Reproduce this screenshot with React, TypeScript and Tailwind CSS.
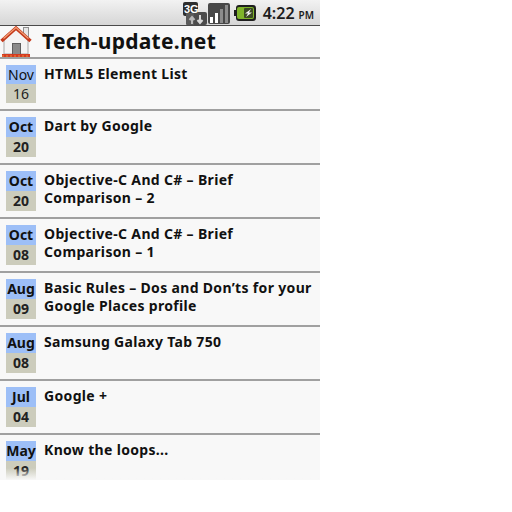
import React from 'react'

type Post = { month: string; day: string; title: string[]; plain?: boolean }

const posts: Post[] = [
  { month: 'Nov', day: '16', title: ['HTML5 Element List'], plain: true },
  { month: 'Oct', day: '20', title: ['Dart by Google'] },
  { month: 'Oct', day: '20', title: ['Objective-C And C# – Brief', 'Comparison – 2'] },
  { month: 'Oct', day: '08', title: ['Objective-C And C# – Brief', 'Comparison – 1'] },
  { month: 'Aug', day: '09', title: ['Basic Rules – Dos and Don’ts for your', 'Google Places profile'] },
  { month: 'Aug', day: '08', title: ['Samsung Galaxy Tab 750'] },
  { month: 'Jul', day: '04', title: ['Google +'] },
  { month: 'May', day: '19', title: ['Know the loops...'] },
]

function StatusIcons() {
  return (
    <div className="flex items-center h-full">
      <svg width="24" height="24" viewBox="0 0 24 24">
        <rect x="0" y="1" width="15" height="14" rx="2" fill="#2e2e2e" />
        <rect x="9" y="11" width="15" height="13" rx="2" fill="#4c4c4c" />
        <rect x="3" y="12" width="8" height="12" rx="1" fill="#5a5a5a" />
        <text x="1" y="12" fontSize="11" fontWeight="700" fill="#fff" fontFamily="'Liberation Sans', sans-serif">3G</text>
        <path d="M9 23v-6M6.500 19L9 16l2.500 3" stroke="#b8b8b8" strokeWidth="2" fill="none" />
        <path d="M17 14v7M14.500 19l2.500 3 2.500-3" stroke="#d8d8d8" strokeWidth="2" fill="none" />
      </svg>
      <svg width="22" height="21" viewBox="0 0 22 21" className="ml-[1px] mt-[2px]">
        <rect x="0" y="0" width="22" height="21" rx="2" fill="#484848" />
        <rect x="2" y="14" width="3" height="6" fill="#fff" />
        <rect x="7" y="10" width="3" height="10" fill="#fff" />
        <rect x="12" y="6" width="3" height="14" fill="#8c8c8c" />
        <rect x="17" y="2" width="3" height="18" fill="#8c8c8c" />
      </svg>
      <svg width="22" height="16" viewBox="0 0 22 16" className="ml-[4px]">
        <rect x="2" y="0" width="20" height="16" rx="3" fill="#1f1f1f" />
        <rect x="0" y="5" width="3" height="6" fill="#1f1f1f" />
        <rect x="3" y="2" width="17" height="12" rx="2" fill="#7fb52a" />
        <rect x="10" y="3" width="9" height="10" rx="1" fill="#3b4a24" />
        <path d="M17 4l-6 4.500h3L12 12l6-4.500h-3z" fill="#f2f2f2" />
      </svg>
    </div>
  )
}

function HomeIcon() {
  return (
    <svg width="33" height="33" viewBox="0 0 33 33" className="shrink-0">
      <rect x="23.500" y="2.500" width="5" height="11" fill="#e6e6e6" stroke="#8f8f8f" strokeWidth="1" />
      <path d="M4 15L16 4l12 11v14H4z" fill="#f4f4f4" stroke="#a8a8a8" strokeWidth="1" />
      <path d="M1.500 16L16 3l14.500 13" fill="none" stroke="#c53a1c" strokeWidth="3.500" />
      <path d="M3.500 13.500L16 2.500l12.500 11" fill="none" stroke="#f3a077" strokeWidth="1.200" />
      <rect x="12.500" y="18.500" width="8" height="11" fill="#8a8a8a" stroke="#5e5e5e" strokeWidth="1" />
      <rect x="2" y="29" width="28" height="3" fill="#d43c22" />
      <path d="M2 31h28" stroke="#f08a3a" strokeWidth="1" strokeDasharray="2 2" />
    </svg>
  )
}

export default function App() {
  return (
    <div className="w-[512px] h-[512px] bg-white overflow-hidden font-['Noto_Sans','Open_Sans',sans-serif]">
      <div className="w-[320px] h-[480px] flex flex-col overflow-hidden bg-[#f8f8f8] relative">
        <div className="h-[26px] shrink-0 flex items-center justify-end pr-[6px] border-b border-[#4a4a4a] bg-gradient-to-b from-[#f2f2f2] to-[#d6d6d6]">
          <StatusIcons />
          <div className="ml-[7px] flex items-baseline text-[#1c1c1c] font-semibold">
            <span className="text-[16px] leading-none">4:22</span>
            <span className="text-[10px] leading-none ml-[4px]">PM</span>
          </div>
        </div>
        <div className="h-[31px] shrink-0 flex items-center bg-[#f8f8f8]">
          <HomeIcon />
          <span className="ml-[9px] text-[21px] leading-none font-bold tracking-[0.27px] text-[#111]">Tech-update.net</span>
        </div>
        {posts.map((post, i) => (
          <div key={i} className={`shrink-0 flex border-t-2 border-[#a0a0a0] pl-[6px] pt-[6px] ${post.plain ? 'h-[52px]' : 'h-[54px]'}`}>
            <div className="w-[30px] shrink-0 flex flex-col text-center">
              <div className={`bg-[#9dbff7] text-[#111] leading-[19px] ${post.plain ? 'h-[19px] text-[14px]' : 'h-[20px] text-[14px] font-bold'}`}>{post.month}</div>
              <div className={`bg-[#ccccbc] text-[#222] leading-[19px] ${post.plain ? 'h-[19px] text-[14px]' : 'h-[20px] text-[14px] font-bold'}`}>{post.day}</div>
            </div>
            <div className="ml-[8px] text-[14px] leading-[18px] font-bold tracking-[0.33px] text-[#111] whitespace-nowrap">
              {post.title.map((line) => <div key={line}>{line}</div>)}
            </div>
          </div>
        ))}
        <div className="absolute left-0 bottom-0 w-full h-[12px] bg-gradient-to-b from-transparent to-[#f8f8f8]" />
      </div>
    </div>
  )
}
